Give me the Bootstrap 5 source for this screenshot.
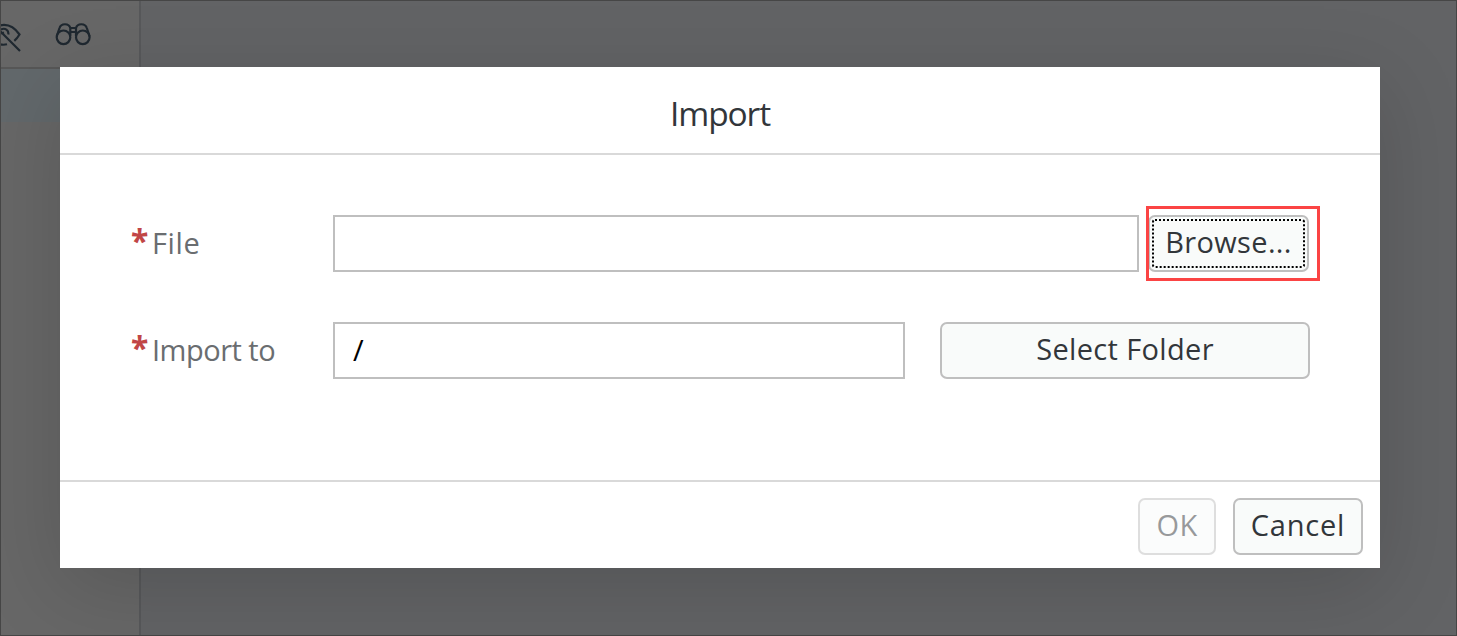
<!DOCTYPE html>
<html lang="en">
<head>
<meta charset="utf-8">
<meta name="viewport" content="width=device-width, initial-scale=1">
<title>Import</title>
<link href="https://cdn.jsdelivr.net/npm/bootstrap@5.3.0/dist/css/bootstrap.min.css" rel="stylesheet">
<style>
  body { font-family: "Open Sans", "Noto Sans", sans-serif; color: #32363a; font-size: 29px; line-height: 40px; }
  .workspace { height: 636px; background: #626365; }
  .side-pane { width: 141px; background: #676767; border-right: 2px solid #57585a; }
  .side-tools { height: 69px; border-bottom: 2px solid #575757; }
  .side-selected { height: 53px; background: #62686b; }
  .side-tools svg { fill: none; stroke: #1f2830; stroke-width: 2.2; }
  .frame { inset: 0; border: 1px solid #464646; z-index: 1; }
  .import-dialog { left: 60px; top: 67px; width: 1320px; height: 501px; z-index: 2;
    --bs-modal-border-width: 0; --bs-modal-border-radius: 0; box-shadow: 0 20px 80px rgba(0,0,0,.15); }
  .import-dialog .modal-header { height: 88px; padding: 6px 0 0; border-bottom: 2px solid #d9d9d9; border-radius: 0; }
  .import-dialog .modal-footer { height: 88px; border-top: 2px solid #d9d9d9; border-radius: 0; }
  .import-dialog .modal-title { font-size: 33.5px; line-height: 44px; font-weight: 400; letter-spacing: -1.1px; }
  .import-dialog .modal-body { padding: 60px 70px 0 71px; }
  .field-row { height: 57px; margin-bottom: 50px; }
  .field-label { width: 202px; color: #6a6d70; padding-bottom: 2px; }
  .req { width: 21px; color: #c14646; font-weight: 700; font-size: 32px; line-height: 36px; margin-top: -4px; font-family: "Noto Sans", sans-serif; }
  .file-text { letter-spacing: .6px; }
  .dest-text { letter-spacing: -.5px; }
  .import-dialog .form-control { height: 57px; border: 2px solid #bfbfbf; border-radius: 0; font-size: 29px; color: #000; padding: 0 18px 3px; background: #fff; }
  .import-dialog .btn { height: 57px; padding: 0 0 4px; border: 2px solid #bfbfbf; border-radius: 7px; background: #f9fbfa; color: #32363a; font-size: 29px; line-height: 48px; letter-spacing: .35px; }
  .import-dialog .btn:disabled { opacity: .5; }
  .import-dialog .cancel-btn { letter-spacing: .8px; }
  .browse-wrap { margin: 0 1px 0 9px; }
  .browse-btn { width: 161px; outline: 2px dotted #000; outline-offset: -6px; }
  .callout-box { left: -2px; top: -9px; width: 174px; height: 75px; border: 3px solid #fb4444; }
</style>
</head>
<body>
<div class="workspace position-relative overflow-hidden">
  <aside class="side-pane h-100">
    <div class="side-tools d-flex">
      <svg width="139" height="67" viewBox="0 0 139 67" aria-hidden="true">
        <path d="M0 25.4C8 23.5 15 28 19.5 34.5C18 37 16.5 39 14.3 40.8M0 44.3C2.5 45 5 44.8 7 44.3M1 29.5C5 27.5 9 30 8.3 34.5M0 31L20 51M1 33.5l3-1"/>
        <circle cx="63.5" cy="37.3" r="6.8"/><circle cx="82.8" cy="37.3" r="6.8"/>
        <path d="M56.6 36.5L59.5 28C61 23 69 23 70.3 28V36M89.7 36.5L86.8 28C85.3 23 77.3 23 76 28V36M70 28h6M70 32h6"/>
      </svg>
    </div>
    <div class="side-selected"></div>
  </aside>
  <div class="frame position-absolute"></div>

  <section class="modal modal-content import-dialog d-flex position-absolute" role="dialog" aria-labelledby="dlg-title">
    <header class="modal-header justify-content-center w-100">
      <h1 class="modal-title" id="dlg-title">Import</h1>
    </header>
    <div class="modal-body w-100">
      <div class="field-row d-flex">
        <label class="field-label d-flex align-items-center" for="file"><span class="req">*</span><span class="file-text">File</span></label>
        <input class="form-control flex-fill w-auto" id="file" type="text">
        <div class="browse-wrap position-relative">
          <button class="btn browse-btn" type="button">Browse...</button>
          <div class="callout-box position-absolute pe-none"></div>
        </div>
      </div>
      <div class="field-row d-flex">
        <label class="field-label d-flex align-items-center" for="dest"><span class="req">*</span><span class="dest-text">Import to</span></label>
        <input class="form-control" id="dest" type="text" value="/" style="width:572px">
        <button class="btn flex-fill" type="button" style="margin-left:35px">Select Folder</button>
      </div>
    </div>
    <footer class="modal-footer d-flex justify-content-end align-items-start w-100 p-0">
      <button class="btn" type="button" disabled style="width:78px;margin:16px 17px 0 0">OK</button>
      <button class="btn cancel-btn" type="button" style="width:130px;margin:16px 17px 0 0">Cancel</button>
    </footer>
  </section>
</div>
<script src="https://cdn.jsdelivr.net/npm/bootstrap@5.3.0/dist/js/bootstrap.bundle.min.js"></script>
</body>
</html>
